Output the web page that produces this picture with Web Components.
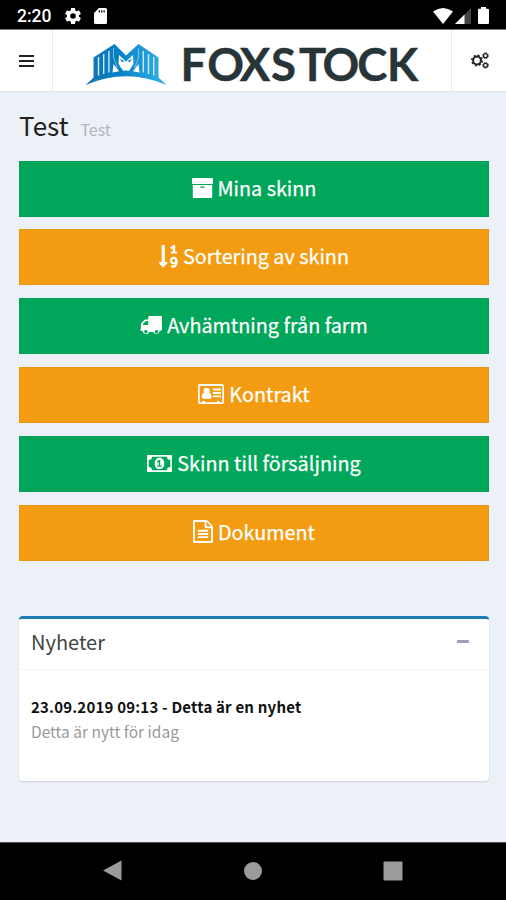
<!DOCTYPE html>
<html lang="sv">
<head>
<meta charset="utf-8">
<title>Foxstock</title>
<style>
  html, body { margin: 0; height: 100%; }
  body {
    font-family: "Noto Sans CJK SC", "Noto Sans", sans-serif;
    background: #ecf0f7;
    color: #222;
    overflow: hidden;
  }
</style>
</head>
<body>
<fox-app>
  <status-bar slot="top" time="2:20"></status-bar>
  <app-header slot="top"></app-header>
  <page-title sub="Test">Test</page-title>
  <menu-list>
    <menu-button icon="archive">Mina skinn</menu-button>
    <menu-button icon="sort" color="orange">Sortering av skinn</menu-button>
    <menu-button icon="truck">Avhämtning från farm</menu-button>
    <menu-button icon="card" color="orange">Kontrakt</menu-button>
    <menu-button icon="money">Skinn till försäljning</menu-button>
    <menu-button icon="file" color="orange">Dokument</menu-button>
  </menu-list>
  <news-box heading="Nyheter">
    <news-item heading="23.09.2019 09:13 - Detta är en nyhet">Detta är nytt för idag</news-item>
  </news-box>
  <nav-bar slot="bottom"></nav-bar>
</fox-app>

<script>
// width, height, shapes
const ICONS = {
  archive: [21, 20, `<path d="M.8 0h19.4q.8 0 .8.8v4.4q0 .8-.8.8H.8Q0 6 0 5.200V.8Q0 0 .8 0z"/>
    <path fill-rule="evenodd" d="M.8 7h19.400V19q0 1-.9 1H1.700q-.9 0-.9-1zM8.800 8.500q-.7 0-.7.6t.7.6h3.400q.7 0 .7-.6t-.7-.6z"/>`],
  sort: [19, 23, `<path d="M2.600 0h3.200v17h2.400q.6.300.2.900l-3.600 4.400q-.6.500-1.200 0L0 17.900q-.4-.6.200-.9h2.400z"/>
    <path d="M11.700 8.600V6.800h2V3.200l-1.400 1-1.200-1.500L14.200 0h2v6.800h1.900v1.800z"/>
    <path fill-rule="evenodd" d="M14.600 11.800c2.700 0 4.100 2 4.100 4.900 0 3.600-1.800 6-4.600 6-.9 0-1.800-.2-2.400-.5l.7-2c1.800.8 3.100.2 3.500-1.400-2.200 1.100-5-.3-5-3.100 0-2.200 1.600-3.900 3.700-3.900zm0 2c-.9 0-1.400.8-1.400 1.800s.6 1.700 1.500 1.700 1.400-.5 1.400-1.300c0-1.300-.6-2.200-1.500-2.200z"/>`],
  truck: [22, 19, `<path fill-rule="evenodd" d="M9.100 0h12q.9 0 .9.900v12.300q0 1.700-2.300 1.700a3.300 3.300 0 0 1-6.300 1H9.100a3.300 3.300 0 0 1-6.400-1Q0 15 0 13.600q.9-.3.900-1.200V8.500q0-.8.600-1.400l2.800-3q.7-.7 1.600-.7h2.300V.9q0-.9.900-.9zM8.200 5H6.300q-.4 0-.7.300L2.900 8.100v.8h5.300zM5.800 13.900a1.700 1.700 0 1 0 .1 0zM16.500 13.900a1.700 1.700 0 1 0 .1 0z"/>`],
  card: [26, 20, `<path fill-rule="evenodd" d="M2 0h22q2 0 2 2v16q0 2-2 2H2q-2 0-2-2V2q0-2 2-2zm.2 2q-.5 0-.5.500v15q0 .8.700.8h2v-1.300h2.500v1.300h12v-1.300h2.500v1.300h2.200q.7 0 .7-.8v-15q0-.5-.5-.5z"/>
    <circle cx="8.700" cy="6.800" r="3.100"/><path d="M6.300 8.800c1.500 1 3.300 1 4.800 0 1.700.3 2.500 1.900 2.500 4 0 1.300-.6 1.900-1.600 1.900H5.400c-1 0-1.600-.6-1.600-1.900 0-2.100.8-3.700 2.500-4z"/>
    <path d="M14.900 4.600h8v1.900h-8zM14.900 8h8v1.900h-8zM14.900 11.400h8v1.900h-8z"/>`],
  money: [25, 17, `<path fill-rule="evenodd" d="M.8 0h23.400q.8 0 .8.800v15.400q0 .8-.8.800H.8q-.8 0-.8-.8V.8Q0 0 .8 0zM5 1.700Q5 5 1.700 5v7Q5 12 5 15.300h15q0-3.300 3.300-3.300V5Q20 5 20 1.700z"/>
    <path fill-rule="evenodd" d="M12.500 2.800c3 0 4.800 2.600 4.800 5.700s-1.800 5.700-4.800 5.700-4.800-2.600-4.800-5.700 1.800-5.700 4.800-5.700zm-.7 2.200-2 1.800.8 1 1.100-.8v3.500h-1.500v1.300h4.500v-1.300h-1.500V5z"/>`],
  file: [20, 23, `<path fill-rule="evenodd" d="M1.300 0H13q1 0 1.800.8l4.300 4.400q.9.900.9 2v14.400q0 1.400-1.400 1.400H1.300Q0 23 0 21.600V1.400Q0 0 1.300 0zm.6 1.900v19.200h16.200V8.200h-5.100q-1.400 0-1.400-1.400V1.900zm11.600.1v4.300h4.400q0-.3-.3-.6L14.200 2.300q-.3-.3-.7-.3z"/>
    <path d="M4.800 9.800h10.400v1.900H4.800zM4.800 13h10.400v1.900H4.800zM4.800 16.200h10.400v1.900H4.800z"/>`]
};

function define(name, render) {
  customElements.define(name, class extends HTMLElement {
    connectedCallback() {
      if (this.shadowRoot) return;
      this.attachShadow({ mode: 'open' }).innerHTML = render(this);
    }
  });
}

define('fox-app', () => `
  <style>
    :host { display: flex; flex-direction: column; height: 900px; width: 506px; }
    main { flex: 1; padding: 0 17px 0 19px; }
  </style>
  <slot name="top"></slot>
  <main><slot></slot></main>
  <slot name="bottom"></slot>
`);

define('status-bar', el => `
  <style>
    :host {
      display: flex; align-items: center; height: 30px; box-sizing: border-box;
      padding: 2px 17px 0 17px; background: #000; color: #fff;
      border-bottom: 1px solid #777;
      font: 500 17.500px/28px Roboto, sans-serif;
    }
    svg { display: block; fill: #fff; }
    .gear { margin-left: 14px; }
    .sd { margin-left: 13px; }
    .wifi { margin-left: auto; }
    .cell { margin-left: 2px; }
    .battery { margin-left: 7px; }
  </style>
  <span>${el.getAttribute('time')}</span>
  <svg class="gear" width="16" height="16" viewBox="2 2 20 20"><path d="M19.430 12.980c.04-.32.070-.64.070-.98s-.03-.66-.07-.98l2.110-1.650c.19-.15.24-.42.120-.64l-2-3.460c-.12-.22-.39-.3-.61-.22l-2.490 1c-.52-.4-1.080-.73-1.690-.98l-.38-2.650A.49.49 0 0 0 14 2h-4c-.25 0-.46.180-.49.420l-.38 2.650c-.61.250-1.170.590-1.690.980l-2.490-1c-.23-.09-.49 0-.61.220l-2 3.460c-.13.220-.07.490.120.640l2.110 1.650c-.04.320-.07.650-.07.980s.03.660.07.980l-2.110 1.650c-.19.150-.24.420-.12.640l2 3.460c.12.220.39.300.61.220l2.490-1c.52.400 1.080.730 1.690.980l.38 2.650c.03.240.24.420.49.420h4c.25 0 .46-.18.49-.42l.38-2.650c.61-.25 1.170-.59 1.690-.98l2.490 1c.23.090.49 0 .61-.22l2-3.460c.12-.22.070-.49-.12-.64zM12 15.500a3.500 3.500 0 1 1 0-7 3.500 3.500 0 0 1 0 7z"/></svg>
  <svg class="sd" width="13" height="16" viewBox="0 0 13 16"><path fill-rule="evenodd" d="M5 0h6.500Q13 0 13 1.500v13q0 1.500-1.500 1.500h-10Q0 16 0 14.500V5zM4.700 2.300v2.200h1.200V2.300zm2.400 0v2.200h1.200V2.300zm2.400 0v2.200h1.200V2.300z"/></svg>
  <svg class="wifi" width="20" height="16" viewBox="0 0 20 16"><path d="M0 3.500Q10-3.500 20 3.500L10 16z"/></svg>
  <svg class="cell" width="16" height="16" viewBox="0 0 16 16"><path fill="#444" d="M16 0v16H0z"/><path d="M9.500 6.500V16H0z"/></svg>
  <svg class="battery" width="11" height="17" viewBox="0 0 11 17"><path d="M3 0h5v1.700h2q1 0 1 1V16q0 1-1 1H1q-1 0-1-1V2.700q0-1 1-1h2z"/></svg>
`);

define('app-header', () => `
  <style>
    :host {
      display: grid; grid-template-columns: 53px 1fr 55px; height: 62px; box-sizing: border-box;
      background: #fff; border-bottom: 1px solid #dfe3e9;
    }
    .side { display: flex; align-items: center; }
    .menu { border-right: 1px solid #ebecef; padding-left: 19px; }
    .cogs { border-left: 1px solid #ebecef; padding-left: 19px; }
    svg { display: block; }
  </style>
  <div class="side menu">
    <svg width="16" height="14" viewBox="0 0 16 14" fill="#222"><path d="M0 1h15v2H0zM0 6h15v2H0zM0 11h15v2H0z"/></svg>
  </div>
  <svg width="398" height="61" viewBox="53 30 398 61">
    <defs>
      <linearGradient id="blue" x1="0" x2="1"><stop offset="0" stop-color="#1674ad"/><stop offset=".4" stop-color="#087fc4"/><stop offset="1" stop-color="#34b4ea"/></linearGradient>
    </defs>
    <path fill="url(#blue)" d="M85.500 85Q91 80 93.500 77.500V57.500L114.500 44 126 55.500 138.500 44 158.500 57.500V77.500Q163 81.500 166.500 85 126 67.500 85.500 85z"/>
    <path stroke="#c8ebfa" stroke-width="1.400" fill="none" d="M98.500 57v18.500M103.700 54v20M108.900 51v21.500M153.700 57v18.500M148.500 54v20M143.300 51v21.500"/>
    <path stroke="#8bcdf0" stroke-width=".8" fill="none" d="M113.500 48v10l4 10M138.500 48v10l-4 10"/>
    <path fill="#fff" d="M119 55 126 61.500 133 55 133.500 64 129 70.800Q126 70.200 123 70.800L118.500 64zM113.500 64 119 71.300 112.500 72.500zM138.500 64 133 71.300 139.500 72.500z"/>
    <path fill="#1787cb" d="M119.700 58.500l5 2.800-2.600 1zM132.300 58.500l-5 2.800 2.600 1z"/>
    <text x="180.500 207.200 239.700 271 299 322.500 357.200 387" y="81" font-family="Lato, sans-serif" font-weight="700" font-size="45.500" fill="#273438" stroke="#273438" stroke-width=".4">FOXSTOCK</text>
  </svg>
  <div class="side cogs">
    <svg width="19" height="17" viewBox="0 0 19 17" fill="none" stroke="#222">
      <circle cx="6" cy="8.500" r="3.900" stroke-width="2"/><circle cx="6" cy="8.500" r="5.200" stroke-width="1.500" stroke-dasharray="2 2.080"/>
      <circle cx="14.500" cy="3.700" r="2" stroke-width="1.300"/><circle cx="14.500" cy="3.700" r="2.900" stroke-width="1" stroke-dasharray="1.200 1.070"/>
      <circle cx="14.500" cy="13.300" r="2" stroke-width="1.300"/><circle cx="14.500" cy="13.300" r="2.900" stroke-width="1" stroke-dasharray="1.200 1.070"/>
    </svg>
  </div>
`);

define('page-title', el => `
  <style>
    :host {
      display: flex; align-items: baseline; gap: 12px; height: 68.500px;
      box-sizing: border-box; padding-top: 13px; font-size: 26px; line-height: 40px;
    }
    small { font-size: 16px; color: #b2b5bb; }
  </style>
  <span><slot></slot></span><small>${el.getAttribute('sub')}</small>
`);

define('menu-list', () => `
  <style>:host { display: flex; flex-direction: column; gap: 12.900px; }</style>
  <slot></slot>
`);

define('menu-button', el => {
  const [w, h, art] = ICONS[el.getAttribute('icon')];
  const orange = el.getAttribute('color') === 'orange';
  return `
  <style>
    :host {
      display: flex; align-items: center; justify-content: center; gap: 5px;
      height: 56px; box-sizing: border-box; padding-bottom: 2px;
      color: #fff; font-size: 19.800px; line-height: 30px;
      -webkit-text-stroke: .25px #fff;
      background: ${orange ? '#f39c12' : '#00a65a'};
      border: 1px solid ${orange ? '#e79512' : '#049d55'};
    }
    svg { display: block; fill: #fff; }
  </style>
  <svg width="${w}" height="${h}" viewBox="0 0 ${w} ${h}">${art}</svg>
  <span><slot></slot></span>`;
});

define('news-box', el => `
  <style>
    :host {
      display: block; height: 165px; box-sizing: border-box; margin-top: 55px;
      background: #fff; border-top: 3px solid #1c7bb3; border-radius: 4px;
      box-shadow: 0 1px 2px rgba(0, 0, 0, .14);
    }
    header {
      display: flex; align-items: center; justify-content: space-between;
      height: 51px; box-sizing: border-box; padding: 0 20px 4px 12px;
      border-bottom: 1px solid #f2f2f2; font-size: 20px; color: #444;
    }
    i { width: 12px; height: 3px; background: #a09fb3; }
  </style>
  <header><span>${el.getAttribute('heading')}</span><i></i></header>
  <slot></slot>
`);

define('news-item', el => `
  <style>
    :host { display: block; padding: 24px 12px 0; font-size: 15.500px; line-height: 25px; color: #999; }
    b { display: block; color: #111; font-size: 15px; letter-spacing: .2px; }
  </style>
  <b>${el.getAttribute('heading')}</b>
  <slot></slot>
`);

define('nav-bar', () => `
  <style>
    :host {
      display: flex; align-items: center; justify-content: space-between; height: 58px;
      box-sizing: border-box; padding: 0 103px 2px; background: #000; border-top: 1px solid #555;
    }
    svg { display: block; fill: #9b9b9b; }
  </style>
  <svg width="19" height="21" viewBox="0 0 19 21"><path d="M18.500.5v20L0 10.500z"/></svg>
  <svg width="18" height="18" viewBox="0 0 18 18"><circle cx="9" cy="9" r="9"/></svg>
  <svg width="20" height="20" viewBox="0 0 20 20"><rect x=".5" y=".5" width="19" height="19" rx="1"/></svg>
`);
</script>
</body>
</html>
